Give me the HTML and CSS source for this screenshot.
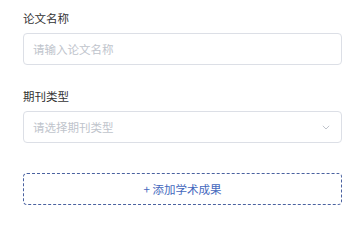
FILE: index.html
```html
<!DOCTYPE html>
<html lang="zh">
<head>
<meta charset="utf-8">
<link rel="stylesheet" href="styles.css">
</head>
<body>
<div class="form">
  <div class="field">
    <div class="label">论文名称</div>
    <div class="input"><span class="placeholder">请输入论文名称</span></div>
  </div>
  <div class="field">
    <div class="label">期刊类型</div>
    <div class="input select">
      <span class="placeholder">请选择期刊类型</span>
      <svg class="arrow" width="8" height="5" viewBox="0 0 8 5"><path d="M0.8 0.8 L4 4 L7.2 0.8" fill="none" stroke="#c0c4cc" stroke-width="1"/></svg>
    </div>
  </div>
  <div class="add">+ 添加学术成果</div>
</div>
</body>
</html>
```
FILE: styles.css
```css
html, body {
  margin: 0;
  padding: 0;
  background: #ffffff;
}
body {
  font-family: "Noto Sans CJK SC", "Liberation Sans", sans-serif;
  font-size: 11.5px;
}
.form {
  padding: 8px 16px 0 23px;
  display: flex;
  flex-direction: column;
}
.field {
  display: flex;
  flex-direction: column;
  margin-bottom: 21px;
}
.label {
  line-height: 20px;
  color: #333333;
  margin-bottom: 5px;
}
.input {
  box-sizing: border-box;
  height: 32px;
  border: 1px solid #dcdfe6;
  border-radius: 4px;
  display: flex;
  align-items: center;
  padding: 0 10px 0 9px;
}
.placeholder {
  color: #c0c4cc;
}
.select {
  justify-content: space-between;
}
.arrow {
  display: block;
  margin-right: 1px;
}
.add {
  margin-top: 9px;
  box-sizing: border-box;
  height: 32px;
  border: 1px dashed #4a62a0;
  border-radius: 4px;
  display: flex;
  align-items: center;
  justify-content: center;
  color: #4468bd;
}
```
